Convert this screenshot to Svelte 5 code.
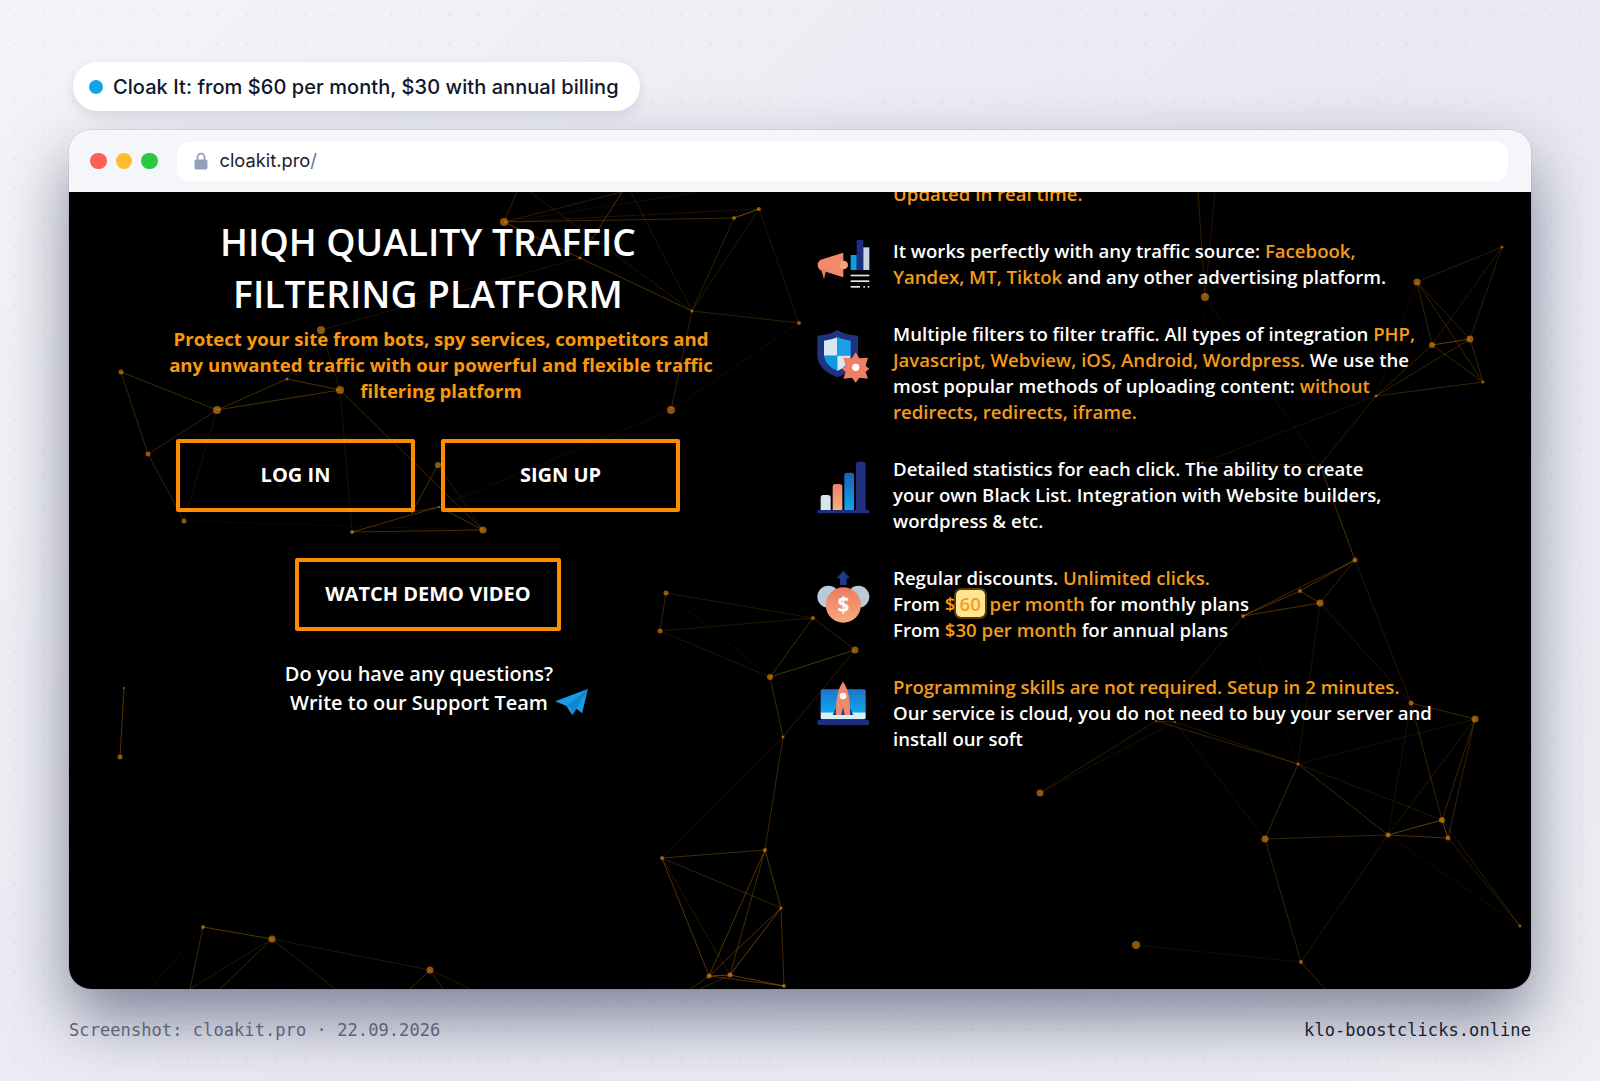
<script>
	// node positions are page coordinates, the svg viewBox starts at the viewport corner
	const n = {
		a: [504, 222, 4], b: [580, 258, 1.5], c: [734, 218, 2], d: [759, 209, 2], e: [692, 311, 1.5], f: [799, 323, 2],
		g: [321, 330, 4], h: [121, 372, 2.5], i: [217, 410, 4], j: [287, 379, 1.5], k: [340, 390, 4], l: [148, 454, 2.5],
		m: [184, 521, 2.5], nn: [671, 410, 4], o: [438, 465, 3], p: [352, 532, 2], q: [483, 530, 3.5], q1: [439, 507, 1], q2: [412, 512, 1],
		r: [666, 593, 2.5], s: [660, 631, 2.5], t: [813, 618, 2], u: [770, 677, 3], v: [855, 650, 3.5], w: [783, 737, 1.5],
		x: [765, 850, 2], y: [662, 858, 2], z: [781, 908, 1.5], z1: [784, 986, 2], z2: [709, 976, 2.5], z3: [730, 975, 2.5],
		bl1: [203, 927, 2], bl2: [272, 939, 3.5], bl3: [430, 970, 3.5], sl1: [124, 688, 1], sl2: [120, 757, 2.5],
		ra: [1205, 297, 4], rb: [1502, 247, 1.5], rc: [1417, 282, 3.5], rd: [1432, 345, 3], re: [1470, 339, 3.5], rf: [1483, 382, 1.5], rg: [1376, 396, 1.5],
		rh: [1320, 465, 1], ri: [1202, 463, 1], rj: [1355, 560, 2.5], rk: [1300, 591, 2], rl: [1320, 603, 3.5], rm: [1243, 616, 2],
		rn: [1411, 703, 2.5], ro: [1475, 719, 3.5], rp: [1298, 764, 1.5], rq: [1156, 721, 1], rr: [1175, 722, 1], rs: [1040, 793, 3.5],
		rt: [1265, 839, 3.5], ru: [1388, 835, 2.5], rv: [1442, 820, 3], rw: [1448, 838, 2.5], rx: [1520, 926, 1.5], ry: [1136, 945, 4], rz: [1301, 962, 2]
	};

	const edges = [
		['a', 'c', .25], ['a', 'd', .12], ['a', 'b', .2], ['c', 'd', .5], ['c', 'e', .2], ['d', 'e', .15], ['e', 'f', .2], ['a', 'e', .2], ['b', 'e', .12],
		['b', 'g', .12], ['e', 'nn', .2], ['d', 'f', .12], ['h', 'i', .28], ['h', 'l', .22], ['l', 'i', .22], ['l', 'm', .22], ['i', 'j', .28], ['i', 'k', .3],
		['j', 'k', .3], ['g', 'k', .15], ['g', 'j', .15], ['k', 'q', .25], ['k', 'p', .1], ['m', 'q', .06], ['p', 'q', .28], ['p', 'q1', .3], ['q1', 'q', .3],
		['o', 'q2', .3], ['q2', 'q1', .22], ['o', 'q', .15], ['i', 'm', .1], ['nn', 'q1', .08], ['f', 'nn', .08],
		['r', 's', .22], ['r', 't', .14], ['s', 't', .14], ['r', 'u', .08], ['s', 'u', .14], ['t', 'u', .28], ['u', 'v', .32], ['t', 'v', .2], ['u', 'w', .28], ['v', 'w', .18],
		['w', 'x', .25], ['w', 'y', .07], ['x', 'y', .28], ['y', 'z', .22], ['x', 'z', .32], ['z', 'z1', .28], ['y', 'z2', .32], ['x', 'z2', .32], ['x', 'z3', .28],
		['z', 'z2', .3], ['z', 'z3', .4], ['y', 'z3', .15], ['z2', 'z1', .3], ['z3', 'z1', .4], ['z2', 'z3', .4],
		['bl1', 'bl2', .35], ['bl2', 'bl3', .14], ['sl1', 'sl2', .32],
		['rc', 'rb', .18], ['rc', 're', .2], ['rc', 'rd', .22], ['rc', 'rf', .22], ['rb', 're', .18], ['rb', 'rd', .14], ['rd', 're', .4], ['rd', 'rf', .22], ['re', 'rf', .22],
		['rg', 'rf', .22], ['rg', 're', .22], ['rg', 'rd', .22], ['rg', 'rc', .07], ['rg', 'rh', .18], ['rh', 'rj', .3], ['ri', 'rh', .14], ['ri', 'rg', .1],
		['ra', 'ri', .04], ['ra', 'rh', .08], ['rj', 'rk', .32], ['rj', 'rl', .22], ['rj', 'rm', .26], ['rk', 'rl', .32], ['rk', 'rm', .32], ['rl', 'rm', .32], ['rm', 'rq', .14],
		['rl', 'rp', .12], ['rl', 'rn', .14], ['rj', 'rn', .14], ['rm', 'rp', .05], ['rn', 'ro', .26], ['rn', 'rv', .22], ['rn', 'ru', .1], ['ro', 'rv', .22], ['ro', 'rw', .22], ['ro', 'ru', .14],
		['rp', 'rq', .22], ['rp', 'rr', .14], ['rp', 'ro', .1], ['rp', 'rt', .26], ['rp', 'ru', .26], ['rp', 'rv', .14], ['rq', 'rr', .22], ['rq', 'rs', .18], ['rr', 'rs', .1], ['rr', 'rt', .1],
		['rt', 'ru', .22], ['ru', 'rv', .4], ['ru', 'rw', .3], ['rv', 'rw', .4], ['rv', 'rx', .18], ['rw', 'rx', .18], ['ru', 'rx', .08], ['rt', 'rz', .22], ['ru', 'rz', .14], ['ry', 'rz', .08], ['ry', 'rt', .05]
	];

	// lines cut off by the edge of the viewport
	const stubs = [
		[504, 222, 517, 192, .22], [504, 222, 622, 192, .18], [580, 258, 622, 192, .3], [692, 311, 631, 192, .14], [692, 311, 530, 192, .14], [504, 222, 700, 192, .08],
		[1205, 297, 1198, 192, .18], [1205, 297, 1215, 192, .14], [1301, 962, 1325, 989, .22], [272, 939, 190, 989, .14], [272, 939, 220, 989, .22], [203, 927, 190, 989, .26], [203, 927, 150, 989, .08],
		[272, 939, 335, 989, .18], [430, 970, 410, 989, .26], [430, 970, 443, 989, .22], [430, 970, 470, 989, .14], [709, 976, 690, 989, .22], [730, 975, 700, 989, .22]
	];
</script>

<div class="page">
	<div class="pill">
		<span class="pill-dot"></span>
		<span>Cloak It: from $60 per month, $30 with annual billing</span>
	</div>

	<div class="browser">
		<div class="toolbar">
			<div class="lights">
				<span class="light red"></span>
				<span class="light yellow"></span>
				<span class="light green"></span>
			</div>
			<div class="address">
				<svg class="lock" viewBox="0 0 14 18" width="14" height="18">
					<path d="M3.5 8V5.2a3.5 3.5 0 0 1 7 0V8" fill="none" stroke="#94a0b8" stroke-width="1.8" />
					<rect x="0.5" y="7.5" width="13" height="10" rx="2" fill="#94a0b8" />
				</svg>
				<span class="url">cloakit.pro<span class="slash">/</span></span>
			</div>
		</div>

		<div class="viewport">
			<svg class="network" viewBox="69 192 1462 797" width="1462" height="797" aria-hidden="true">
				{#each edges as [from, to, alpha]}
					<line x1={n[from][0]} y1={n[from][1]} x2={n[to][0]} y2={n[to][1]} stroke="#ff9a10" stroke-opacity={alpha} />
				{/each}
				{#each stubs as [x1, y1, x2, y2, alpha]}
					<line {x1} {y1} {x2} {y2} stroke="#ff9a10" stroke-opacity={alpha} />
				{/each}
				{#each Object.values(n) as [cx, cy, r]}
					<circle {cx} {cy} {r} fill="#ff9a10" fill-opacity=".55" />
				{/each}
			</svg>

			<div class="left">
				<h1>HIQH QUALITY TRAFFIC<br />FILTERING PLATFORM</h1>
				<p class="lead">Protect your site from bots, spy services, competitors and<br />any unwanted traffic with our powerful and flexible traffic<br />filtering platform</p>
				<div class="btn-row">
					<button class="btn">LOG IN</button>
					<button class="btn">SIGN UP</button>
				</div>
				<button class="btn demo">WATCH DEMO VIDEO</button>
				<div class="support">
					<div class="support-q">Do you have any questions?</div>
					<div class="support-w">
						<span>Write to our Support Team</span>
						<svg viewBox="850 115 105 85" width="35" height="28">
							<path d="M952 118 853 155 887 170 905 198 917 178 935 192Z" fill="#1a9be6" />
							<path d="M887 170 952 118 905 198 904 178Z" fill="#0f86cf" />
						</svg>
					</div>
				</div>
			</div>

			<div class="right">
				<div class="row">
					<div class="copy"><em>Updated in real time.</em></div>
				</div>

				<div class="row">
					<svg class="icon" viewBox="48 156 168 168">
						<path d="M60 210 130 188V262L60 240Q46 225 60 210Z" fill="#f2896c" />
						<circle cx="131" cy="225" r="13" fill="#f4a27a" />
						<path d="M63 238 72 268 78 242Z" fill="#ea7a5e" />
						<rect x="170" y="150" width="20" height="90" fill="#1f2f80" />
						<rect x="190" y="172" width="18" height="68" fill="#c5d3e2" />
						<rect x="152" y="195" width="18" height="45" fill="#0e9ce2" />
						<rect x="152" y="254" width="56" height="5" fill="#dfe6ee" />
						<rect x="152" y="271" width="56" height="5" fill="#dfe6ee" />
						<rect x="152" y="288" width="28" height="5" fill="#dfe6ee" />
						<rect x="190" y="288" width="5" height="5" fill="#dfe6ee" />
						<rect x="203" y="288" width="5" height="5" fill="#dfe6ee" />
					</svg>
					<div class="copy">It works perfectly with any traffic source: <em>Facebook,</em><br /><em>Yandex, MT, Tiktok</em> and any other advertising platform.</div>
				</div>

				<div class="row">
					<svg class="icon" viewBox="48 405 168 168">
						<path d="M52 437Q90 435 112 420 135 435 174 437V500Q170 540 112 562 56 540 52 500Z" fill="#1d3480" />
						<path d="M72 452Q95 450 112 442V497H72Z" fill="#d8e7f3" />
						<path d="M112 442Q130 450 152 452V497H112Z" fill="#1c9fe8" />
						<path d="M72 497H112V543Q74 525 72 497Z" fill="#0e98e2" />
						<path d="M112 497H152Q150 525 112 543Z" fill="#d8e7f3" />
						<path d="M167 487 178 505 204 503 197 528 208 536 197 546 204 566 178 563 167 578 156 563 130 566 137 546 126 536 137 528 130 503 156 505Z" fill="#ee7f62" />
						<circle cx="167" cy="532" r="11" fill="#fff" />
					</svg>
					<div class="copy">Multiple filters to filter traffic. All types of integration <em>PHP,</em><br /><em>Javascript, Webview, iOS, Android, Wordpress.</em> We use the<br />most popular methods of uploading content: <em>without</em><br /><em>redirects, redirects, iframe.</em></div>
				</div>

				<div class="row">
					<svg class="icon" viewBox="48 60 168 168">
						<defs>
							<linearGradient id="bar-orange" x1="0" y1="0" x2="0" y2="1"><stop offset="0" stop-color="#f0806a" /><stop offset="1" stop-color="#f6b07c" /></linearGradient>
							<linearGradient id="bar-blue" x1="0" y1="0" x2="0" y2="1"><stop offset="0" stop-color="#1f5fb8" /><stop offset="1" stop-color="#0ea5ec" /></linearGradient>
						</defs>
						<rect x="52" y="210" width="156" height="10" rx="4" fill="#1f2f80" />
						<path d="M62 210V173a8 8 0 0 1 8-8H84a8 8 0 0 1 8 8V210Z" fill="#d6e5e8" />
						<path d="M98 210V140a8 8 0 0 1 8-8H119a8 8 0 0 1 8 8V210Z" fill="url(#bar-orange)" />
						<path d="M133 210V106a8 8 0 0 1 8-8H154a8 8 0 0 1 8 8V210Z" fill="url(#bar-blue)" />
						<path d="M168 210V73a8 8 0 0 1 8-8H189a8 8 0 0 1 8 8V210Z" fill="#1f2f80" />
					</svg>
					<div class="copy">Detailed statistics for each click. The ability to create<br />your own Black List. Integration with Website builders,<br />wordpress &amp; etc.</div>
				</div>

				<div class="row">
					<svg class="icon" viewBox="48 387 168 168">
						<defs>
							<linearGradient id="coin" x1="0" y1="0" x2="0" y2="1"><stop offset="0" stop-color="#ef7a62" /><stop offset="1" stop-color="#f5ab7c" /></linearGradient>
						</defs>
						<circle cx="85" cy="470" r="33" fill="#b9cad8" />
						<circle cx="175" cy="470" r="33" fill="#b9cad8" />
						<circle cx="130" cy="495" r="53" fill="url(#coin)" />
						<path d="M130 392 150 415H140V435H120V415H110Z" fill="#1f3a8a" />
						<text x="130" y="517" text-anchor="middle" class="dollar">$</text>
					</svg>
					<div class="copy">Regular discounts. <em>Unlimited clicks.</em><br />From <em>$<span class="mark">60</span> per month</em> for monthly plans<br />From <em>$30 per month</em> for annual plans</div>
				</div>

				<div class="row">
					<svg class="icon" viewBox="48 714 168 168">
						<defs>
							<linearGradient id="screen" x1="0" y1="0" x2="0" y2="1"><stop offset="0" stop-color="#1f74cc" /><stop offset=".75" stop-color="#0ea5ec" /><stop offset=".8" stop-color="#d8eef5" /></linearGradient>
						</defs>
						<rect x="62" y="748" width="135" height="90" rx="5" fill="url(#screen)" />
						<rect x="52" y="840" width="156" height="15" rx="5" fill="#1f2f80" />
						<path d="M98 825 112 795V825ZM160 825 146 795V825Z" fill="#1f3a8a" />
						<path d="M129 725Q152 755 150 825H108Q106 755 129 725Z" fill="#f08a6a" />
						<circle cx="129" cy="768" r="10" fill="#fff" />
						<path d="M124 825 129 800 134 825Z" fill="#1f3a8a" />
					</svg>
					<div class="copy"><em>Programming skills are not required. Setup in 2 minutes.</em><br />Our service is cloud, you do not need to buy your server and<br />install our soft</div>
				</div>
			</div>
		</div>
	</div>

	<div class="footer">
		<span class="shot">Screenshot: cloakit.pro · 22.09.2026</span>
		<span class="domain">klo-boostclicks.online</span>
	</div>
</div>

<style>
	:global(body) {
		margin: 0;
	}

	.page {
		box-sizing: border-box;
		width: 1600px;
		height: 1081px;
		overflow: hidden;
		padding: 62px 69px 0;
		background:
			radial-gradient(circle, rgba(30, 40, 80, 0.05) 1px, transparent 1.3px) 0 0 / 29px 29px,
			linear-gradient(135deg, #f4f4f8 0%, #e8e9f2 55%, #eeeff4 100%);
		font-family: Inter, "Liberation Sans", sans-serif;
	}

	.pill {
		display: inline-flex;
		align-items: center;
		gap: 10px;
		height: 49px;
		margin-left: 4px;
		padding: 0 21px 0 16px;
		background: #fff;
		border-radius: 25px;
		box-shadow: 0 4px 12px rgba(30, 40, 80, 0.12);
		color: #10162b;
		font-size: 20px;
		font-weight: 500;
		letter-spacing: 0.06px;
	}

	.pill-dot {
		width: 14px;
		height: 14px;
		border-radius: 50%;
		background: #0ea5e9;
	}

	.browser {
		width: 1462px;
		margin-top: 19px;
		border-radius: 22px;
		box-shadow: 0 30px 64px rgba(25, 30, 65, 0.5), 0 0 0 1px rgba(30, 40, 80, 0.06);
		overflow: hidden;
	}

	.toolbar {
		display: flex;
		align-items: center;
		height: 62px;
		padding: 0 23px 0 21px;
		background: #f5f6fa;
	}

	.lights {
		display: flex;
		gap: 9px;
	}

	.light {
		width: 16.5px;
		height: 16.5px;
		border-radius: 50%;
	}

	.red { background: #ff5f57; }
	.yellow { background: #febc2e; }
	.green { background: #28c840; }

	.address {
		flex: 1;
		display: flex;
		align-items: center;
		gap: 12px;
		height: 39px;
		margin-left: 19px;
		padding-left: 17px;
		background: #fff;
		border-radius: 12px;
		color: #1a2033;
		font-size: 18.3px;
	}

	.url {
		margin-bottom: 2px;
	}

	.slash {
		color: #64708a;
	}

	.viewport {
		position: relative;
		display: flex;
		height: 797px;
		overflow: hidden;
		background: #000;
		font-family: "Open Sans", sans-serif;
		font-weight: 600;
		color: #fff;
	}

	.network {
		position: absolute;
		top: 0;
		left: 0;
	}

	.left,
	.right {
		position: relative;
	}

	.left {
		width: 718px;
		display: flex;
		flex-direction: column;
		align-items: center;
		padding-top: 24px;
	}

	h1 {
		margin: 0;
		font-size: 37.2px;
		line-height: 52px;
		font-weight: 600;
		text-align: center;
	}

	.lead {
		margin: 6px 0 0 26px;
		color: #f9980f;
		font-size: 18.6px;
		font-weight: 700;
		line-height: 26px;
		text-align: center;
	}

	.btn-row {
		display: flex;
		gap: 26px;
		margin-top: 35px;
	}

	.btn {
		box-sizing: border-box;
		width: 239px;
		height: 73px;
		padding-bottom: 3px;
		background: transparent;
		border: 4px solid #ff8c00;
		border-radius: 2px;
		color: #fff;
		font-family: "Open Sans", sans-serif;
		font-size: 20px;
		font-weight: 700;
	}

	.demo {
		width: 266px;
		margin-top: 46px;
	}

	.support {
		margin-top: 28px;
		font-size: 20px;
		text-align: center;
	}

	.support-q {
		line-height: 29px;
		margin-right: 18px;
	}

	.support-w {
		display: flex;
		align-items: center;
		justify-content: center;
		gap: 6px;
		height: 28px;
		margin-left: 23px;
	}

	.right {
		display: flex;
		flex-direction: column;
		gap: 31px;
		margin-top: -11px;
		margin-left: 29px;
	}

	.row {
		display: flex;
		align-items: flex-start;
		gap: 21px;
	}

	.row:first-child {
		padding-left: 77px;
	}

	.icon {
		flex: none;
		width: 56px;
		height: 56px;
		margin-top: 4px;
		margin-bottom: -10px;
		overflow: visible;
	}

	.dollar {
		fill: #fff;
		font-family: "Open Sans", sans-serif;
		font-size: 62px;
		font-weight: 700;
	}

	.copy {
		font-size: 18.6px;
		line-height: 26px;
		white-space: nowrap;
	}

	em {
		font-style: normal;
		color: #f39c1a;
	}

	.mark {
		padding: 1px 4px;
		background: #ffe694;
		border-radius: 5px;
		box-shadow: 0 0 0 2px rgba(130, 80, 10, 0.7);
	}

	.footer {
		display: flex;
		justify-content: space-between;
		width: 1462px;
		margin-top: 31px;
		font-family: "DejaVu Sans Mono", "Liberation Mono", monospace;
		font-size: 17px;
		letter-spacing: 0.08px;
	}

	.shot {
		color: #5a6378;
	}

	.domain {
		color: #1a2033;
	}
</style>
